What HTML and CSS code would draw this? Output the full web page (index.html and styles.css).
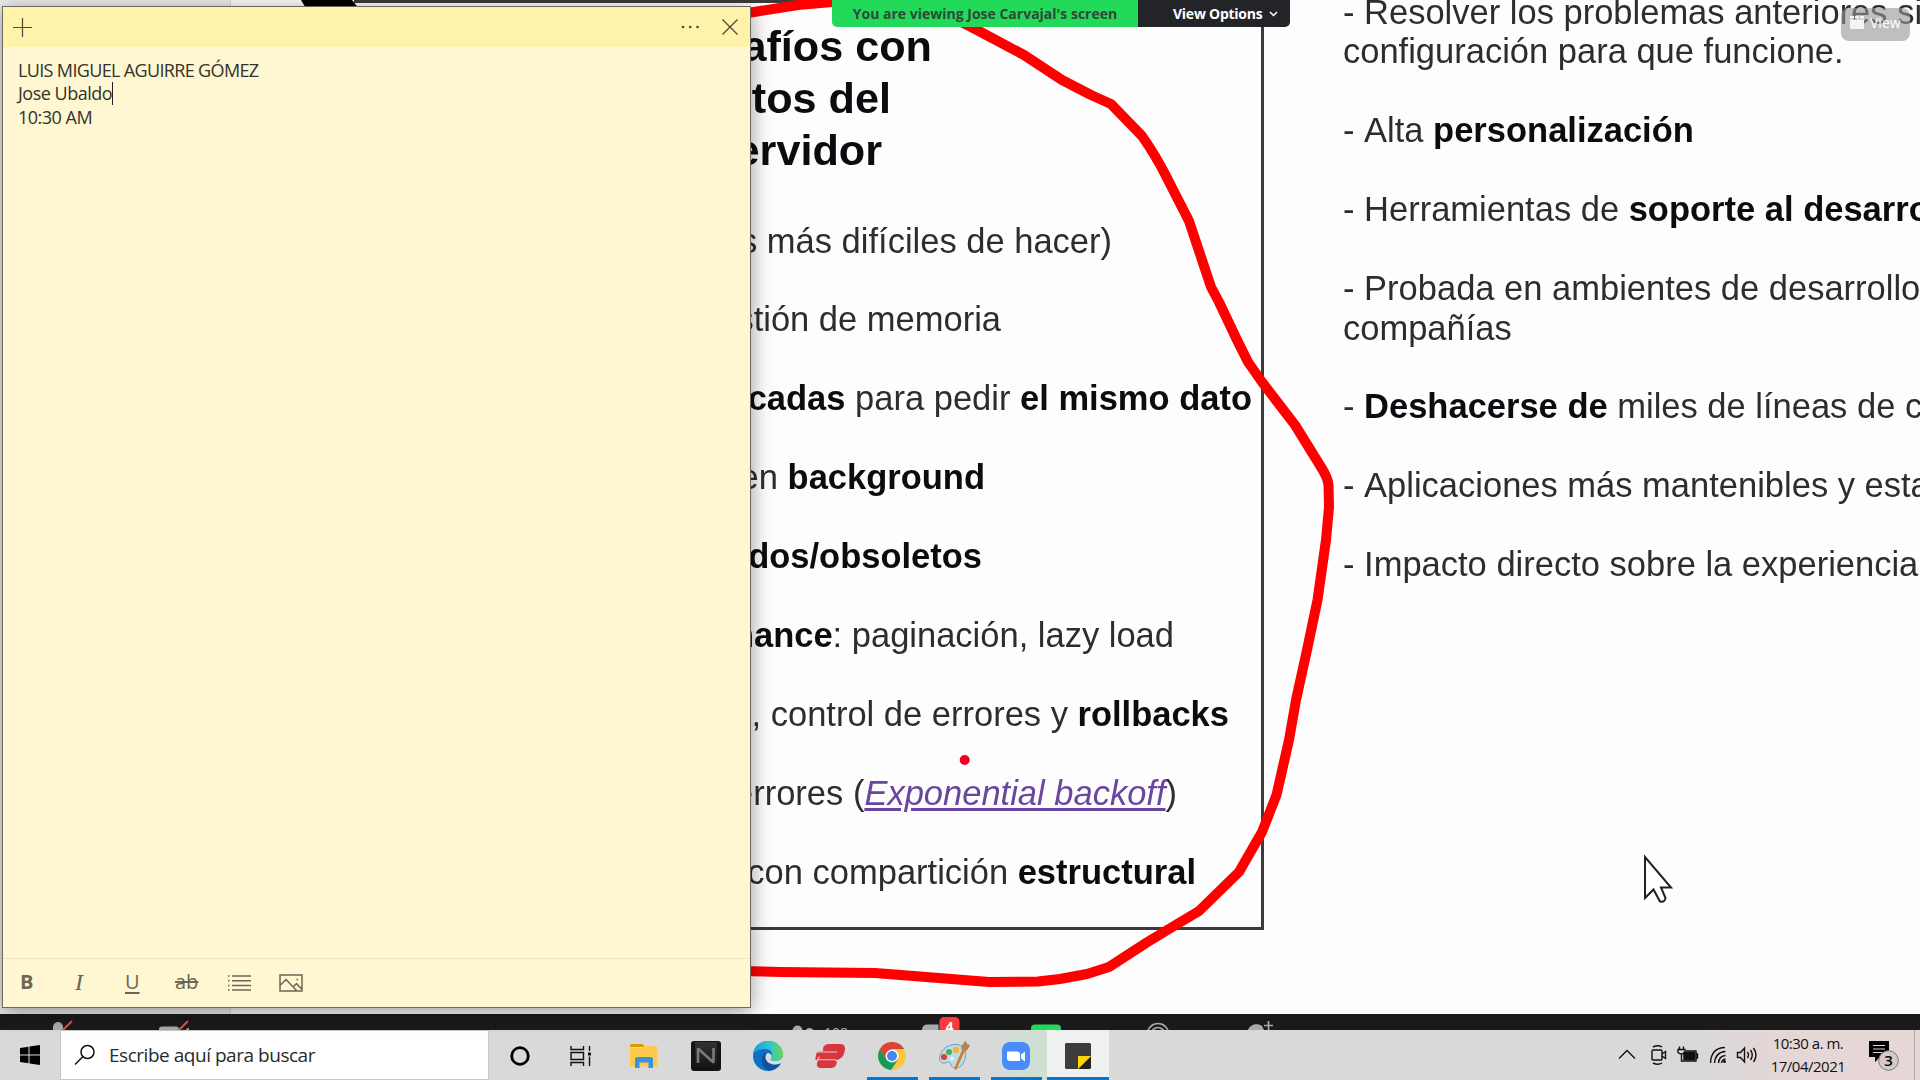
FILE: index.html
```html
<!DOCTYPE html>
<html lang="es">
<head>
<meta charset="utf-8">
<title>Escritorio</title>
<link rel="stylesheet" href="styles.css">
</head>
<body>
<div class="desktop">
  <main class="share">
    <div class="rail"></div>
    <section class="panel">
      <h1 class="title">
        <span class="t1">afíos con</span>
        <span class="t2">tos del</span>
        <span class="t3">ervidor</span>
      </h1>
      <ul class="challenges">
        <li class="c1">s más difíciles de hacer)</li>
        <li class="c2">stión de memoria</li>
        <li class="c3"><b>cadas</b> para pedir <b>el mismo dato</b></li>
        <li class="c4">en <b>background</b></li>
        <li class="c5"><b>dos/obsoletos</b></li>
        <li class="c6"><b>nance</b>: paginación, lazy load</li>
        <li class="c7">n, control de errores y <b>rollbacks</b></li>
        <li class="c8">errores (<a class="link">Exponential backoff</a>)</li>
        <li class="c9">con compartición <b>estructural</b></li>
      </ul>
    </section>
    <section class="benefits">
      <p>- Resolver los problemas anteriores si<br>configuración para que funcione.</p>
      <p>- Alta <b>personalización</b></p>
      <p>- Herramientas de <b>soporte al desarro</b></p>
      <p>- Probada en ambientes de desarrollo<br>compañías</p>
      <p>- <b>Deshacerse de</b> miles de líneas de c</p>
      <p>- Aplicaciones más mantenibles y esta</p>
      <p>- Impacto directo sobre la experiencia</p>
    </section>
    <svg class="ink" width="1920" height="1014" viewBox="0 0 1920 1014">
      <path d="M301 0h51l8 10h-53z" fill="#000"/>
      <path d="M740 14L751 12.500 798 5 832 2Q910 -6 977 30L1024 55 1062 80 1091 95 1111 104 1142 136Q1156 156 1166 176L1189 221 1211 287 1219 302 1237 340 1248 362 1262 382 1295 425 1321 467Q1328 478 1328.500 485L1329 507 1326 540 1317.500 600 1307 650 1296 700 1289 740 1276.500 795 1262 832 1239 872 1199 911 1164 932 1146 943 1109 967 1087 974 1060 979 1038 981.500 989 982 920 976.500 875 973 781 972 740 971" fill="none" stroke="#f00" stroke-width="10" stroke-linejoin="round"/>
      <ellipse cx="964.700" cy="760" rx="5" ry="5" fill="#f00020"/>
      <path d="M1645 857V898L1653.500 889.500 1660 901.500Q1665 902.500 1665.500 898L1661 887.500H1671z" fill="#fff" stroke="#20202a" stroke-width="2"/>
    </svg>
  </main>

  <div class="meeting">
    <svg width="1920" height="16" viewBox="0 1014 1920 16">
      <g fill="#a9a9a9">
        <rect x="53" y="1022" width="10" height="20" rx="5"/>
        <rect x="159" y="1026.500" width="20" height="14" rx="3"/><path d="M185 1030l4-2.500v3z"/>
        <circle cx="797.500" cy="1030.500" r="5"/><circle cx="809.500" cy="1032.500" r="4.500"/>
        <rect x="922" y="1024.500" width="28" height="20" rx="5"/>
        <path d="M1248 1030c2-6 10-7 14-4l2 4z"/>
      </g>
      <path d="M61 1032l11-11M177 1032l11-11" stroke="#f2494c" stroke-width="2"/>
      <rect x="939" y="1016.500" width="21" height="20" rx="5" fill="#fb383c" stroke="#1a1a1a"/>
      <rect x="1031" y="1024.500" width="30" height="20" rx="4" fill="#22d959"/>
      <g fill="none" stroke="#a9a9a9" stroke-width="1.700"><circle cx="1158" cy="1034" r="10.500"/><circle cx="1158" cy="1034" r="6.500"/><path d="M1264 1025.500h9M1268.500 1021v9"/></g>
      <text class="badge" x="949.500" y="1032" text-anchor="middle">4</text>
      <text class="count" x="824" y="1038">108</text>
    </svg>
  </div>

  <footer class="taskbar">
    <div class="start"><svg width="20" height="20" viewBox="0 0 20 20"><path d="M0 3l8.500-1.200V9.500H0zM9.500 1.600L20 0V9.500H9.500zM0 10.500h8.500v7.700L0 17zM9.500 10.500H20V20L9.500 18.400z"/></svg></div>
    <div class="search">
      <svg width="22" height="22" viewBox="0 0 22 22" fill="none" stroke="#111" stroke-width="1.500"><circle cx="13.500" cy="8" r="6.500"/><path d="M9 12.500L1 20.500"/></svg>
      <span>Escribe aquí para buscar</span>
    </div>
    <div class="tile"><svg width="20" height="20" viewBox="0 0 20 20"><circle cx="10" cy="10" r="8.300" fill="none" stroke="#000" stroke-width="2.800"/></svg></div>
    <div class="tile taskview"><svg width="22" height="20" viewBox="0 0 22 20" fill="none" stroke="#111" stroke-width="1.400"><path d="M1 0v3.500h12.500V0M1 20v-3.500h12.500V20M1 6.500h12.500v7H1zM19.500 0v5M19.500 10.500V20"/><path d="M18 6.500h3v3h-3z" fill="#111" stroke="none"/></svg></div>
    <div class="tile"><svg width="28" height="24" viewBox="0 0 28 24"><path d="M1 0h11q2 0 2 3H0V1z" fill="#dc9a06"/><path d="M0 4h12l2-2h12q1.500 0 1.500 2v18.500H0z" fill="#fdca4d"/><path d="M5 24V15q0-2 2-2h14q2 0 2 2v9h-4.500v-5.500h-9V24z" fill="#3994dc"/></svg></div>
    <div class="tile"><svg width="30" height="30" viewBox="0 0 30 30"><defs><linearGradient id="ng" x2="0" y2="1"><stop stop-color="#333"/><stop offset="1" stop-color="#111"/></linearGradient></defs><rect width="30" height="30" rx="3" fill="#151515"/><rect x="4" y="1" width="22" height="28" fill="url(#ng)"/><path d="M7 22V7.500L22.500 21.500V7" fill="none" stroke="#7a7a7a" stroke-width="2.600" stroke-linejoin="bevel"/></svg></div>
    <div class="tile"><svg width="30" height="30" viewBox="0 0 30 30"><defs><linearGradient id="eg"><stop stop-color="#2297dc"/><stop offset=".55" stop-color="#31c4d2"/><stop offset="1" stop-color="#6ad84b"/></linearGradient></defs><circle cx="15" cy="15" r="15" fill="#0d70c8"/><path d="M0 13C1 5 7 0 15 0c9 0 15 6 15 13 0 5-4 7-8 7-4 0-5-2-4-3 3-7-2-9-6-9C6 8 1 11 0 13z" fill="url(#eg)"/><path d="M13 11c-7 5-5 15 3 18.800 5-.5 9-3.500 11.500-7.300-6 2.500-14 .5-15-5.500-.3-2.500 0-4.500.5-6z" fill="#10509d"/><path d="M18 17c-1 1 0 3 4 3 4 0 7-1.500 8-5v6l-2.500 1.500c-6 2.500-14 .5-15-5.500 0-3 1-5 3-5 3 1 4 3 2.500 5z" fill="#d9dbdc"/></svg></div>
    <div class="tile"><svg width="30" height="24" viewBox="0 0 30 24" fill="#d9353d"><path d="M14 0H25Q30 0 30 4.500C30 11 26 16 21 16H20Q23 18 21 21 20 24 16 24H6Q1 24 2 19L3 16H1Q0 16 .500 14L1.500 9Q2 7.500 4 7.500H8Q7 0 14 0z"/><path d="M1 8h21M2 15.800h19M2.500 15.500l2-3" stroke="#ecc9ca" stroke-width="1.100"/></svg></div>
    <div class="tile open"><svg width="28" height="28" viewBox="0 0 28 28"><circle cx="14" cy="14" r="14" fill="#fbc93f"/><path d="M1.900 7A14 14 0 0 0 13 28L20 17.500 14 20 8 17z" fill="#149b57"/><path d="M1.900 7a14 14 0 0 1 24.300 0H14L8 17.500z" fill="#d8443b"/><circle cx="14" cy="14" r="6.500" fill="#fff"/><circle cx="14" cy="14" r="5" fill="#4285f4"/></svg></div>
    <div class="tile open"><svg width="32" height="30" viewBox="0 0 32 30"><path d="M4 10C9 3 21 1 26 7c3 5 2 13-3 18-4 3-9 2-10-1-1-4-3-3-6-2-6 1-7-6-3-12z" fill="#b9dced" stroke="#6fa0bc"/><circle cx="6" cy="16" r="3" fill="#db3f36"/><circle cx="11" cy="11" r="3" fill="#4cb04a"/><circle cx="18" cy="9" r="3" fill="#f8b51e"/><circle cx="14" cy="17.500" r="2" fill="#e7f2f6"/><path d="M24 9l3 1-9 19-2-1z" fill="#d87b27"/><path d="M24 9c-2-3 1-7 4-9l1 3 3 1c-1 3-3 6-5 6z" fill="#b08455"/></svg></div>
    <div class="tile open zoomtile"><svg width="28" height="28" viewBox="0 0 28 28"><rect width="28" height="28" rx="8" fill="#4a8cfb"/><path d="M5 9.500h10q3 0 3 3V19H8q-3 0-3-3zM19 12.500l4-3v10l-4-3z" fill="#fff"/></svg></div>
    <div class="tile active"><svg width="26" height="26" viewBox="0 0 26 26"><path d="M1 0h24l1 1v12L13 26H1l-1-1V1z" fill="#3c3c3c"/><path d="M26 13v12l-1 1H13z" fill="#222"/><path d="M13 13h13L13 26z" fill="#fdd603"/></svg></div>
    <div class="tray">
      <svg width="140" height="20" viewBox="0 0 140 20" fill="none" stroke="#111" stroke-width="1.400">
        <path d="M1 13.500l8-8 8 8"/>
        <rect x="34" y="5" width="10" height="10" rx="1"/><path d="M44 9l3.500-2.500v7L44 11M35 2q5-2.500 9 0M35 18q5 2.500 9 0"/>
        <path d="M61.500 1.500v3M65.500 1.500v3M60 4.500h7v3q-3.500 3-7 0zM63.500 9v7H78V6H68M78 9h1.500v4H78"/><path d="M66 7.500h10.500v7H66z" fill="#111"/>
        <path d="M92.500 18Q93 3 107 2.500M96.500 18q1-11 11-11.500M100.500 18q.5-7 7-7.500M103.500 18q.5-3.500 4-4"/><circle cx="106.500" cy="16.500" r="1.500" fill="#111" stroke="none"/>
        <path d="M119.500 7.500h3l4-4.500v14l-4-4.500h-3zM129.500 7q2 3 0 6M132.500 5q3.500 5 0 10M135.500 3q5 7 0 14"/>
      </svg>
      <div class="clock"><span>10:30 a. m.</span><span>17/04/2021</span></div>
      <svg class="notices" width="32" height="32" viewBox="0 0 32 32"><path d="M0 2h20v16h-9l-5 5v-5H0z"/><path d="M4 6.500h12M4 10h12M4 13.500h9" stroke="#e6d6d6" stroke-width="1.200"/><circle cx="19.500" cy="21.500" r="9.800" fill="#d3cbcb" stroke="#777"/><text x="19.500" y="26.500" text-anchor="middle">3</text></svg>
    </div>
    <div class="peek"></div>
  </footer>

  <div class="banner">
    <div class="viewing">You are viewing Jose Carvajal's screen</div>
    <div class="options">View Options <svg width="9" height="6" viewBox="0 0 9 6"><path d="M1 1l3.500 3.500L8 1" fill="none" stroke="#fff" stroke-width="1.500"/></svg></div>
  </div>

  <div class="view"><svg width="14" height="13" viewBox="0 0 14 13" fill="#f4f4f4"><path d="M0 3.500h14V13H0zM0 0h4v2.500H0zM5 0h4v2.500H5zM10 0h4v2.500h-4z"/></svg>View</div>

  <aside class="note">
    <header class="notebar">
      <svg width="19" height="19" viewBox="0 0 19 19" stroke="#4d4936" stroke-width="1.200"><path d="M9.500 0v19M0 9.500h19"/></svg>
      <div class="noteactions">
        <svg width="20" height="4" viewBox="0 0 20 4" fill="#4d4936"><circle cx="2" cy="2" r="1.300"/><circle cx="9.200" cy="2" r="1.300"/><circle cx="16.500" cy="2" r="1.300"/></svg>
        <svg width="16" height="16" viewBox="0 0 16 16" stroke="#4d4936" stroke-width="1.300"><path d="M.5.500l15 15M15.500.500l-15 15"/></svg>
      </div>
    </header>
    <div class="notebody">
      <p>LUIS MIGUEL AGUIRRE GÓMEZ</p>
      <p class="typing">Jose Ubaldo<i class="caret"></i></p>
      <p class="last">10:30 AM</p>
    </div>
    <div class="tools">
      <span class="bold">B</span>
      <span class="italic">I</span>
      <span class="under">U</span>
      <span class="strike">ab</span>
      <svg width="23" height="16" viewBox="0 0 23 16" stroke="#6b6754" stroke-width="1.500"><path d="M4 1h19M4 5.700h19M4 10.400h19M4 15h19M0 1h1.500M0 5.700h1.500M0 10.400h1.500M0 15h1.500"/></svg>
      <svg width="24" height="18" viewBox="0 0 24 18" fill="none" stroke="#6b6754" stroke-width="1.500"><path d="M1 1h22v16H1zM1 11.500l6-6 11 11.500M14 13l3.500-3.500L23 15.500M17.500 5.500h1.500"/></svg>
    </div>
  </aside>
</div>
</body>
</html>
```
FILE: styles.css
```css
* { box-sizing: border-box; }
body { margin: 0; }
svg { display: block; flex: none; }
p, h1, ul { margin: 0; padding: 0; }

.desktop {
  position: relative;
  display: flex;
  flex-direction: column;
  width: 1920px;
  height: 1080px;
  overflow: hidden;
  font-family: "Open Sans", "Noto Sans", sans-serif;
  color: #111;
}

/* Shared slide: a scaled-up video stream, slightly soft */
.share {
  position: relative;
  display: flex;
  height: 1014px;
  background: #fdfdfd;
  overflow: hidden;
  font: 34.5px/39.45px "Liberation Sans", Arial, sans-serif;
  font-kerning: none;
  color: #2c2c31;
}
.share b { color: #0c0c10; }
.rail { width: 231px; background: #ececee; border-right: 1px solid #ddd; }
.panel, .benefits { filter: blur(.5px); }
.panel {
  width: 910px;
  height: 930px;
  margin: 0 79px 0 123px;
  padding-top: 17px;
  border: 3px solid #3b3b3b;
  border-left: 0;
  text-align: right;
  white-space: nowrap;
}
.title { font-size: 43.2px; line-height: 52px; color: #0c0c10; }
.title span { display: block; }
.t1 { margin-right: 329px; }
.t2 { margin-right: 370px; }
.t3 { margin-right: 379px; }
.challenges { padding-top: 45.5px; list-style: none; }
.challenges li { margin-bottom: 39.45px; }
.c1 { margin-right: 149px; }
.c2 { margin-right: 260px; }
.c3 { margin-right: 9px; }
.c4 { margin-right: 276px; }
.c5 { margin-right: 279px; }
.c6 { margin-right: 87px; }
.c7 { margin-right: 32px; }
.c8 { margin-right: 84px; }
.c9 { margin-right: 65px; }
.link { font-style: italic; color: #6a45a0; text-decoration: underline; text-decoration-thickness: 3px; text-underline-offset: 3px; }
.benefits { width: 577px; margin-top: -7px; white-space: nowrap; }
.benefits p { margin-bottom: 39.45px; }
.ink { position: absolute; left: 0; top: 0; }

/* Meeting controls peeking above the taskbar */
.meeting { height: 16px; background: #1a1a1a; overflow: hidden; }
.badge { font: bold 14px "Open Sans", sans-serif; fill: #fff; }
.count { font: 14px "Open Sans", sans-serif; fill: #a9a9a9; }

/* Taskbar */
.taskbar {
  display: flex;
  height: 50px;
  background: linear-gradient(90deg, #d9d9d9 1690px, #e6d6d6 1800px);
}
.start { display: grid; place-items: center; width: 60px; }
.search {
  display: flex;
  align-items: center;
  gap: 13px;
  width: 429px;
  padding-left: 13px;
  background: #fff;
  border: 1px solid #c8c8c8;
  font-size: 19px;
  letter-spacing: -.47px;
  color: #2b2b2b;
}
.tile { position: relative; display: grid; place-items: center; width: 62px; padding-top: 1px; }
.taskview { padding-right: 3px; }
.open::after, .active::after {
  content: "";
  position: absolute;
  left: 6px;
  right: 5px;
  bottom: 0;
  height: 3px;
  background: #0078d7;
}
.active { background: #eef1ef; }
.active::after { left: 0; right: 0; }
.zoomtile { background: linear-gradient(90deg, #d9d9d9, #cfe0d2); }
.tray { display: flex; align-items: center; flex: 1; justify-content: flex-end; padding-right: 13px; }
.clock {
  display: flex;
  flex-direction: column;
  align-items: center;
  width: 78px;
  margin: 0 22px 0 11px;
  font-size: 15px;
  line-height: 23px;
  letter-spacing: -.5px;
}
.notices text { font: 600 15px "Open Sans", sans-serif; }
.peek { width: 6px; border-left: 1px solid #b3a9a9; }

/* Sharing banner */
.banner {
  position: absolute;
  left: 832px;
  top: 0;
  display: flex;
  width: 458px;
  height: 27px;
  border-radius: 0 0 5px 5px;
  overflow: hidden;
  font-size: 14px;
  font-weight: 700;
  line-height: 27px;
}
.viewing { width: 306px; background: #23d959; text-align: center; color: #2b4a38; }
.options {
  display: flex;
  align-items: center;
  gap: 7px;
  flex: 1;
  padding-left: 35px;
  background: #222427;
  color: #fff;
  letter-spacing: -.25px;
}
.view {
  position: absolute;
  left: 1841px;
  top: 8px;
  display: flex;
  align-items: center;
  gap: 6px;
  width: 69px;
  height: 33px;
  padding: 0 0 4px 9px;
  border-radius: 8px;
  background: rgba(150, 150, 152, .6);
  color: #fff;
  font-size: 14px;
}

/* Sticky note */
.note {
  position: absolute;
  left: 2px;
  top: 6px;
  display: flex;
  flex-direction: column;
  width: 749px;
  height: 1002px;
  border: 1px solid #6d6a5c;
  background: #fff7d1;
  box-shadow: 0 4px 20px rgba(0, 0, 0, .4);
  color: #33322c;
}
.notebar {
  display: flex;
  align-items: center;
  justify-content: space-between;
  height: 40px;
  padding: 0 12px 0 10px;
  background: #fff2ab;
}
.noteactions { display: flex; align-items: center; gap: 21px; }
.notebody { flex: 1; padding: 12px 15px; font-size: 18px; line-height: 23px; letter-spacing: -.65px; }
.typing { display: flex; align-items: center; height: 22px; letter-spacing: -.5px; }
.last { padding-top: 2px; letter-spacing: -.5px; }
.caret { width: 1px; height: 23px; background: #222; }
.tools {
  display: flex;
  align-items: center;
  height: 49px;
  border-top: 1px solid #eee6c2;
  padding-left: 17px;
  color: #6b6754;
  font-size: 20px;
}
.tools span { line-height: 24px; margin-top: -2px; }
.bold { width: 55px; font-weight: 700; }
.italic { width: 50px; font-family: "Liberation Serif", serif; font-style: italic; font-size: 24px; }
.under { width: 50px; text-decoration: underline; text-underline-offset: 3px; }
.strike { width: 53px; text-decoration: line-through; }
.tools svg + svg { margin-left: 28px; }
```
